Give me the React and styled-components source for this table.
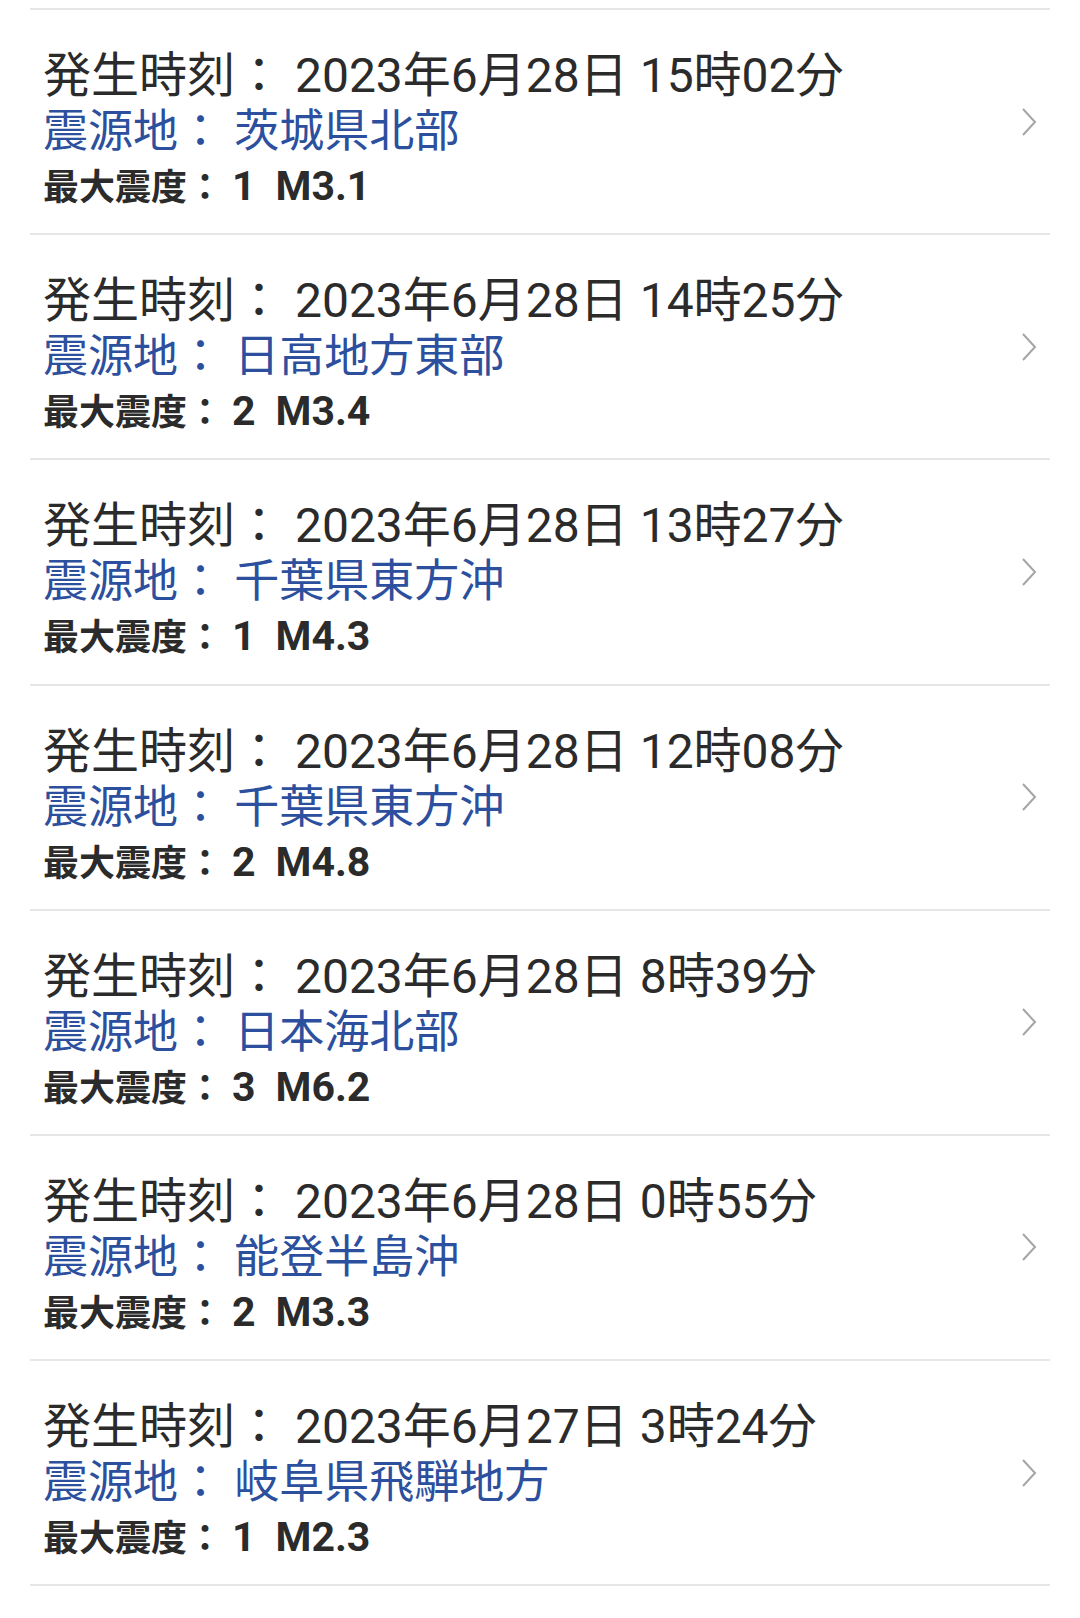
import React from 'react';
import styled, { createGlobalStyle } from 'styled-components';

const quakes = [
  { time: '2023年6月28日 15時02分', place: '茨城県北部', intensity: '1', magnitude: 'M3.1' },
  { time: '2023年6月28日 14時25分', place: '日高地方東部', intensity: '2', magnitude: 'M3.4' },
  { time: '2023年6月28日 13時27分', place: '千葉県東方沖', intensity: '1', magnitude: 'M4.3' },
  { time: '2023年6月28日 12時08分', place: '千葉県東方沖', intensity: '2', magnitude: 'M4.8' },
  { time: '2023年6月28日 8時39分', place: '日本海北部', intensity: '3', magnitude: 'M6.2' },
  { time: '2023年6月28日 0時55分', place: '能登半島沖', intensity: '2', magnitude: 'M3.3' },
  { time: '2023年6月27日 3時24分', place: '岐阜県飛騨地方', intensity: '1', magnitude: 'M2.3' },
];

const App = () => (
  <>
    <GlobalStyle />
    <Page>
      <List>
        {quakes.map((q, i) => (
          <Row key={i}>
            <Info>
              <TimeLine>発生時刻： {q.time}</TimeLine>
              <PlaceLine>震源地： {q.place}</PlaceLine>
              <ScaleLine>
                最大震度： <Value>{q.intensity}</Value>
                <Value $gap>{q.magnitude}</Value>
              </ScaleLine>
            </Info>
            <Chevron />
          </Row>
        ))}
      </List>
    </Page>
  </>
);

const GlobalStyle = createGlobalStyle`
  html, body {
    margin: 0;
    padding: 0;
    background: #ffffff;
  }
  body {
    font-family: Roboto, "Noto Sans CJK JP", sans-serif;
  }
`;

const Page = styled.div`
  background: #ffffff;
  min-height: 1618px;
  padding: 8px 30px 0;
  box-sizing: border-box;
`;

const List = styled.div`
  border-top: 2px solid #e6e6e6;
`;

const Row = styled.div`
  display: flex;
  align-items: center;
  box-sizing: content-box;
  height: 168px;
  padding: 38px 12px 17.2px 13px;
  border-bottom: 2px solid #e6e6e6;
`;

const Info = styled.div`
  flex: 1;
  display: flex;
  flex-direction: column;
`;

const TimeLine = styled.div`
  font-size: 48px;
  line-height: 56px;
  color: #2b2b2b;
  white-space: nowrap;
`;

const PlaceLine = styled.div`
  font-size: 45px;
  line-height: 56px;
  color: #2c4f9e;
  white-space: nowrap;
`;

const ScaleLine = styled.div`
  font-size: 36px;
  line-height: 56px;
  font-weight: 700;
  color: #2b2b2b;
  white-space: nowrap;
`;

const Value = styled.span`
  font-size: 41px;
  line-height: 1;
  margin-left: ${props => (props.$gap ? '20px' : '0')};
`;

const ChevronSvg = styled.svg`
  width: 18px;
  height: 32px;
  flex-shrink: 0;
  margin-top: -21px;
`;

const Chevron = () => (
  <ChevronSvg viewBox="0 0 18 32" fill="none">
    <path d="M3 3 L15 16 L3 29" stroke="#a5a5a5" strokeWidth="2" />
  </ChevronSvg>
);

export default App;
